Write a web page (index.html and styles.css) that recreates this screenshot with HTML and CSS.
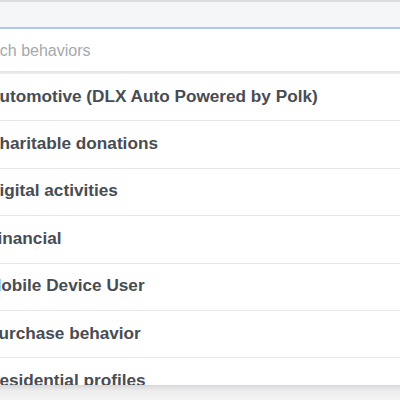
FILE: index.html
```html
<!DOCTYPE html>
<html>
<head>
<meta charset="utf-8">
<link rel="stylesheet" href="styles.css">
</head>
<body>
<div class="panel">
  <div class="top"></div>
  <div class="search"><span class="placeholder">Search behaviors</span></div>
  <div class="sep"></div>
  <ul class="list">
    <li class="row">Automotive (DLX Auto Powered by Polk)</li>
    <li class="row">Charitable donations</li>
    <li class="row">Digital activities</li>
    <li class="row">Financial</li>
    <li class="row">Mobile Device User</li>
    <li class="row">Purchase behavior</li>
    <li class="row">Residential profiles</li>
  </ul>
  <div class="foot"></div>
</div>
</body>
</html>
```

FILE: styles.css
```css
html, body {
  margin: 0;
  padding: 0;
  width: 400px;
  height: 400px;
  overflow: hidden;
  background: #ffffff;
}
.panel {
  width: 400px;
  height: 400px;
  display: flex;
  flex-direction: column;
  font-family: "Liberation Sans", Arial, sans-serif;
}
.top {
  height: 25px;
  background: #f5f6f8;
  border-top: 2px solid #dcdde0;
  border-bottom: 2px solid #b5c5f3;
  flex: none;
}
.search {
  height: 42px;
  flex: none;
  display: flex;
  align-items: center;
  background: #ffffff;
}
.placeholder {
  margin-left: -34px;
  padding-top: 2px;
  font-size: 16px;
  color: #a5a8ad;
  white-space: nowrap;
}
.sep {
  height: 3px;
  flex: none;
  background: linear-gradient(#e2e3e6, #eeeff1);
}
.list {
  list-style: none;
  margin: 0;
  padding: 0;
  height: 311px;
  flex: none;
  overflow: hidden;
  background: #ffffff;
}
.row {
  border-bottom: 1px solid #e6e7ea;
  display: flex;
  align-items: center;
  padding-bottom: 2px;
  box-sizing: border-box;
  height: 47.4px;
  font-size: 17.2px;
  font-weight: bold;
  color: #484c53;
  white-space: nowrap;
  margin-left: -13px;
}
.foot {
  flex: 1;
  background: linear-gradient(#d6d7d9, #eeeeef 40%, #f3f3f4);
}
```
